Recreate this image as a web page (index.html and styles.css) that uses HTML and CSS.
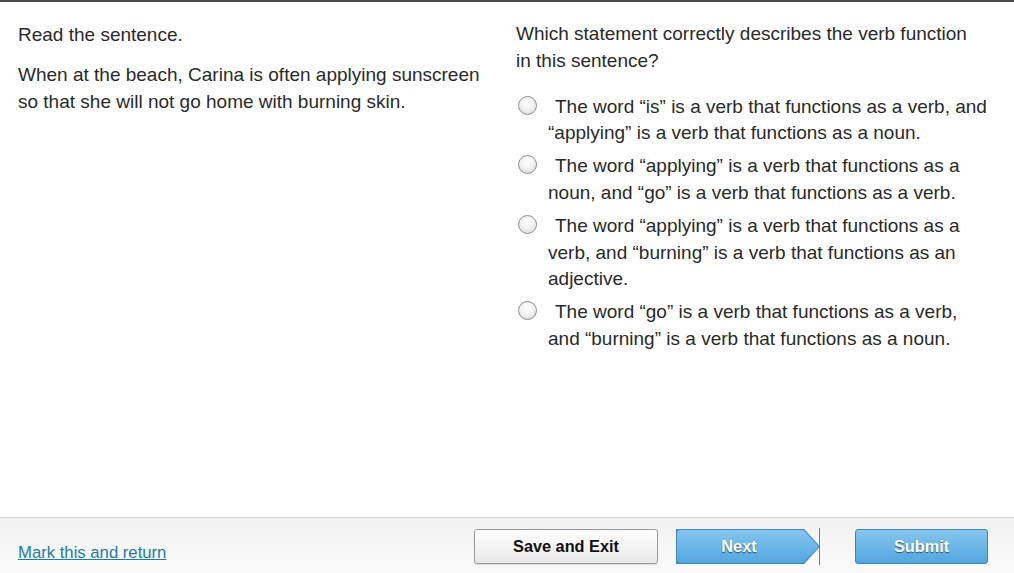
FILE: index.html
```html
<!DOCTYPE html>
<html>
<head>
<meta charset="utf-8">
<link rel="stylesheet" href="styles.css">
</head>
<body>
<div class="page">
  <div class="content">
    <div class="passage">
      <p>Read the sentence.</p>
      <p>When at the beach, Carina is often applying sunscreen so that she will not go home with burning skin.</p>
    </div>
    <div class="question">
      <p class="prompt">Which statement correctly describes the verb function in this sentence?</p>
      <div class="options">
        <div class="option"><span class="radio"></span>The word “is” is a verb that functions as a verb, and “applying” is a verb that functions as a noun.</div>
        <div class="option"><span class="radio"></span>The word “applying” is a verb that functions as a noun, and “go” is a verb that functions as a verb.</div>
        <div class="option"><span class="radio"></span>The word “applying” is a verb that functions as a verb, and “burning” is a verb that functions as an adjective.</div>
        <div class="option"><span class="radio"></span>The word “go” is a verb that functions as a verb, and “burning” is a verb that functions as a noun.</div>
      </div>
    </div>
  </div>
  <div class="footer">
    <a class="mark" href="#">Mark this and return</a>
    <div class="actions">
      <button class="btn btn-save">Save and Exit</button>
      <div class="next-wrap">
        <button class="btn btn-next">Next</button>
        <span class="divider"></span>
      </div>
      <button class="btn btn-submit">Submit</button>
    </div>
  </div>
</div>
</body>
</html>
```
FILE: styles.css
```css
* { box-sizing: border-box; }
html, body { margin: 0; padding: 0; }
body {
  font-family: "Liberation Sans", Arial, sans-serif;
  color: #2a2a2a;
  background: #fff;
  width: 1014px;
  height: 573px;
  overflow: hidden;
}
.page {
  display: flex;
  flex-direction: column;
  height: 573px;
  border-top: 2px solid #4a4a4a;
}
.content {
  flex: 1;
  display: grid;
  grid-template-columns: 498px 516px;
}
.passage {
  padding: 19px 8px 0 18px;
  font-size: 19px;
  line-height: 27px;
}
.passage p { margin: 0 0 13px; }
.question {
  padding: 19px 24px 0 18px;
  font-size: 19px;
  line-height: 26.8px;
}
.prompt { margin: 0 0 19px; padding-right: 10px; }
.options { display: flex; flex-direction: column; gap: 6px; }
.option {
  padding-left: 32px;
  text-indent: -32px;
}
.radio {
  display: inline-block;
  width: 19px;
  height: 19px;
  margin: 0 18px 0 2px;
  border: 1px solid #8e8e8e;
  border-radius: 50%;
  background: radial-gradient(circle at 50% 35%, #ffffff 0%, #f3f3f3 45%, #d4d4d4 100%);
  vertical-align: -2px;
}
.footer {
  height: 56px;
  border-top: 1px solid #d9d9d9;
  background: linear-gradient(#f2f2f2, #fafafa);
  display: flex;
  align-items: center;
  padding: 2px 26px 0 18px;
  justify-content: space-between;
}
.mark {
  font-size: 16.7px;
  color: #1f7aa6;
  text-decoration: underline;
  margin-top: 12px;
}
.actions {
  display: flex;
  align-items: center;
}
.btn {
  font-family: "Liberation Sans", Arial, sans-serif;
  font-weight: bold;
  font-size: 16.3px;
  height: 35px;
  border-radius: 3px;
  cursor: pointer;
  padding: 0;
}
.btn-save {
  width: 184px;
  color: #111;
  border: 1px solid #9a9a9a;
  background: linear-gradient(#ffffff, #e9e9e9);
  box-shadow: 0 1px 1px rgba(0,0,0,0.12);
}
.next-wrap {
  position: relative;
  margin-left: 18px;
  display: flex;
  align-items: center;
}
.next-wrap::before {
  content: "";
  position: absolute;
  left: 0; top: 1px;
  width: 144px; height: 35px;
  background: #3f86bb;
  clip-path: polygon(0 0, 89% 0, 100% 50%, 89% 100%, 0 100%);
}
.btn-next {
  position: relative;
  margin: 1px;
  width: 142px;
  height: 33px;
  color: #fff;
  border: none;
  border-radius: 3px 0 0 3px;
  background: linear-gradient(#86c6ef, #52a6de);
  clip-path: polygon(0 0, 89% 0, 100% 50%, 89% 100%, 0 100%);
  text-shadow: 0 1px 1px rgba(0,0,0,0.55);
  padding-right: 18px;
}
.divider {
  display: block;
  width: 1px;
  height: 37px;
  background: #6a7e8e;
  margin-left: -1px;
}
.btn-submit {
  margin-left: 35px;
  width: 133px;
  color: #fff;
  border: 1px solid #3f86bb;
  background: linear-gradient(#86c6ef, #52a6de);
  text-shadow: 0 1px 1px rgba(0,0,0,0.55);
}
```
